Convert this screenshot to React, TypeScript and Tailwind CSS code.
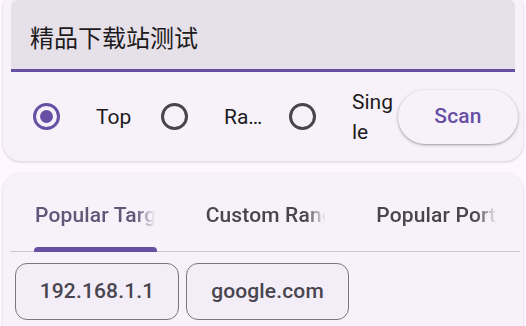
import React from "react";

function Radio({ selected }: { selected?: boolean }) {
  return (
    <div
      className={
        "w-[27px] h-[27px] shrink-0 rounded-full border-[3px] flex items-center justify-center " +
        (selected ? "border-[#6750a4]" : "border-[#49454f]")
      }
    >
      {selected && <div className="w-[13px] h-[13px] rounded-full bg-[#6750a4]" />}
    </div>
  );
}

function Group({ selected, children }: { selected?: boolean; children: React.ReactNode }) {
  return (
    <div className="w-[128px] shrink-0 flex items-center">
      <div className="ml-[22px]">
        <Radio selected={selected} />
      </div>
      <div className="ml-[36px] w-[43px] text-[21px] leading-[30px] text-[#1d1b20]">{children}</div>
    </div>
  );
}

const fade = "[mask-image:linear-gradient(to_right,black_82%,transparent_98%)]";

export default function App() {
  return (
    <div className="w-[526px] h-[326px] overflow-hidden bg-[#fef7ff] font-['Roboto',sans-serif]">
      <div className="mx-[3px] -mt-[9px] pt-[9px] px-2 rounded-[18px] bg-[#f7f2fa] shadow-[0_1px_3px_rgba(0,0,0,0.18)]">
        <div className="h-[72px] rounded-t-[6px] bg-[#e6e0e9] border-b-[3px] border-[#6750a4] flex items-center pl-[19px] pt-[4px] text-[24px] text-[#1d1b20] font-['Noto_Sans_CJK_SC',sans-serif]">
          精品下载站测试
        </div>
        <div className="h-[89px] flex items-center">
          <Group selected>Top</Group>
          <Group>Ra…</Group>
          <Group>
            Sing
            <br />
            le
          </Group>
          <button className="ml-[3px] w-[120px] h-[54px] shrink-0 rounded-full bg-[#f7f2fa] shadow-[0_1px_2px_rgba(0,0,0,0.25),0_1px_3px_1px_rgba(0,0,0,0.1)] text-[21px] font-medium tracking-[0.15px] text-[#6750a4]">
            Scan
          </button>
        </div>
      </div>

      <div className="mx-[3px] mt-[12px] h-[200px] pt-[7px] px-2 rounded-[18px] bg-[#f7f2fa] shadow-[0_1px_3px_rgba(0,0,0,0.18)]">
        <div className="relative w-[512px] h-[72px] flex">
          <div className="absolute left-[-1px] right-[3px] bottom-0 h-px bg-[#cac4d0]" />
          {["Popular Targets", "Custom Range", "Popular Ports"].map((t, i) => (
            <div key={t} className="relative w-[170.67px] shrink-0 px-[24px] flex items-center justify-center">
              <div
                className={
                  "w-[123px] overflow-hidden whitespace-nowrap text-[21px] font-medium tracking-[0.15px] " +
                  fade +
                  " " +
                  (i === 0 ? "text-[#5f5878]" : "text-[#49454f]")
                }
              >
                {t}
              </div>
              {i === 0 && (
                <div className="absolute left-[23px] w-[123px] bottom-0 h-[5px] rounded-t-[4px] bg-[#6750a4]" />
              )}
            </div>
          ))}
        </div>
        <div className="mt-[11px] flex gap-[7px] pl-[4px]">
          <div className="w-[164px] h-[57px] rounded-[12px] border-[1.5px] border-[#79747e] bg-[#f3edf7] flex items-center justify-center text-[21px] font-medium tracking-[0.15px] text-[#49454f]">
            192.168.1.1
          </div>
          <div className="w-[163px] h-[57px] rounded-[12px] border-[1.5px] border-[#79747e] bg-[#f3edf7] flex items-center justify-center text-[21px] font-medium tracking-[0.15px] text-[#49454f]">
            google.com
          </div>
        </div>
      </div>
    </div>
  );
}
